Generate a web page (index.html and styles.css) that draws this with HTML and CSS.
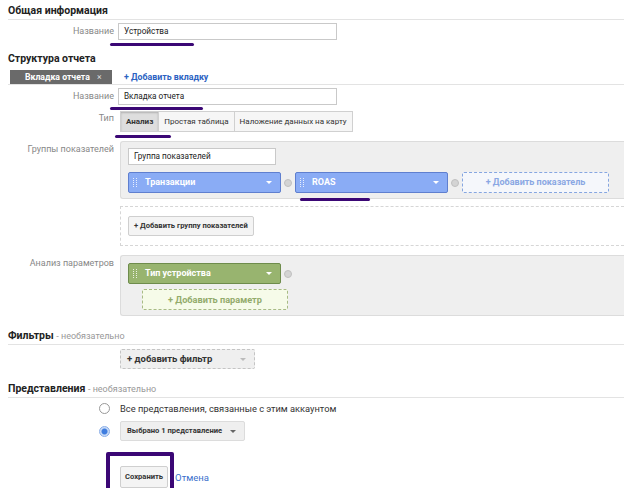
FILE: index.html
```html
<!DOCTYPE html>
<html>
<head>
    <meta charset="UTF-8">
    <title>Вкладка отчета</title>
    <link rel="stylesheet" href="styles.css">
</head>
<body>
    <div class="page">
        <div class="sec-title">Общая информация</div>
        <div class="row row-name1">
            <div class="lbl">Название</div>
            <div class="ctl"><div class="input w-name">Устройства</div></div>
            <span class="mark mark-1"></span>
        </div>

        <div class="sec-title sec-plain">Структура отчета</div>
        <div class="tabs">
            <div class="tab">Вкладка отчета <span class="tab-x">×</span></div>
            <a class="add-link">+ Добавить вкладку</a>
        </div>
        <div class="row row-name2">
            <div class="lbl">Название</div>
            <div class="ctl"><div class="input w-name">Вкладка отчета</div></div>
            <span class="mark mark-2"></span>
        </div>
        <div class="row row-type">
            <div class="lbl lbl-type">Тип</div>
            <div class="ctl">
                <div class="seg">
                    <span class="seg-btn active">Анализ</span>
                    <span class="seg-btn">Простая таблица</span>
                    <span class="seg-btn">Наложение данных на карту</span>
                </div>
            </div>
            <span class="mark mark-3"></span>
        </div>

        <div class="row row-groups">
            <div class="lbl lbl-box">Группы показателей</div>
            <div class="ctl">
                <div class="box">
                    <div class="input w-group">Группа показателей</div>
                    <div class="chips">
                        <div class="chip chip-blue"><span class="grip"></span>Транзакции<span class="caret"></span></div>
                        <span class="remove"></span>
                        <div class="chip chip-blue"><span class="grip"></span>ROAS<span class="caret"></span></div>
                        <span class="remove"></span>
                        <div class="add-dashed add-blue">+ Добавить показатель</div>
                    </div>
                </div>
                <div class="box-dashed">
                    <span class="btn">+ Добавить группу показателей</span>
                </div>
            </div>
            <span class="mark mark-4"></span>
        </div>

        <div class="row row-params">
            <div class="lbl lbl-box">Анализ параметров</div>
            <div class="ctl">
                <div class="box box-params">
                    <div class="chips">
                        <div class="chip chip-green"><span class="grip"></span>Тип устройства<span class="caret"></span></div>
                        <span class="remove"></span>
                    </div>
                    <div class="add-dashed add-green">+ Добавить параметр</div>
                </div>
            </div>
        </div>

        <div class="sec-title sec-opt">Фильтры <span class="opt">- необязательно</span></div>
        <div class="row row-filter">
            <div class="lbl"></div>
            <div class="ctl"><div class="select select-dashed">+ добавить фильтр<span class="caret caret-gray"></span></div></div>
        </div>

        <div class="sec-title sec-opt">Представления <span class="opt">- необязательно</span></div>
        <div class="row row-radio">
            <div class="lbl"><span class="radio"></span></div>
            <div class="ctl radio-text">Все представления, связанные с этим аккаунтом</div>
        </div>
        <div class="row row-radio2">
            <div class="lbl"><span class="radio checked"></span></div>
            <div class="ctl"><div class="select">Выбрано 1 представление<span class="caret caret-dark"></span></div></div>
        </div>

        <div class="row row-actions">
            <div class="lbl"></div>
            <div class="ctl actions">
                <span class="btn btn-save">Сохранить</span>
                <a class="cancel">Отмена</a>
            </div>
            <span class="mark-box"></span>
        </div>
    </div>
</body>
</html>
```

FILE: styles.css
```css
body {
    margin: 0;
    background: #fff;
    font-family: Roboto, "Liberation Sans", Arial, sans-serif;
    font-size: 9px;
    color: #333;
    overflow: hidden;
}
.page { padding: 3px 0 0 8px; }

.sec-title {
    font-size: 10.5px;
    font-weight: bold;
    color: #222;
    line-height: 16px;
    border-bottom: 1px solid #e3e3e3;
}
.sec-plain { border-bottom: none; margin-top: 11px; }
.sec-opt { margin-top: 12px; }
.opt { font-weight: normal; color: #999; font-size: 9px; }

.row {
    position: relative;
    display: flex;
    align-items: flex-start;
}
.lbl {
    width: 106px;
    flex: none;
    text-align: right;
    color: #888;
    line-height: 17px;
    padding-right: 4px;
}
.ctl { flex: 1; min-width: 0; }

.input {
    height: 15px;
    line-height: 15px;
    border: 1px solid #c9c9c9;
    background: #fff;
    padding: 0 5px;
    color: #222;
    font-size: 8.2px;
    box-sizing: content-box;
}
.w-name { width: 207px; }
.w-group { width: 136px; }

.row-name1 { margin-top: 3px; }
.row-name2 { margin-top: 3px; }

.tabs {
    display: flex;
    align-items: center;
    margin-top: 3px;
    border-bottom: 1px solid #e3e3e3;
}
.tab {
    background: #6a6a6a;
    color: #fff;
    font-weight: bold;
    font-size: 8.7px;
    white-space: nowrap;
    line-height: 14px;
    width: 87px;
    padding-left: 15px;
    margin-left: 2px;
}
.tab-x { margin-left: 5px; color: #ddd; font-weight: normal; }
.add-link {
    color: #2c62c2;
    font-weight: bold;
    font-size: 8.8px;
    margin-left: 12px;
}

.row-type { margin-top: 6px; }
.lbl-type { line-height: 14px; }
.seg { display: flex; }
.seg-btn {
    border: 1px solid #d0d0d0;
    background: #f6f6f6;
    padding: 0 5px;
    line-height: 19px;
    font-size: 8px;
    color: #333;
    margin-left: -1px;
}
.seg-btn:first-child { margin-left: 2px; }
.seg-btn.active {
    background: #dedede;
    font-weight: bold;
    box-shadow: inset 0 1px 2px rgba(0, 0, 0, 0.2);
}

.row-groups { margin-top: 9px; }
.lbl-box { padding-top: 0; }
.box {
    background: #efefef;
    border: 1px solid #dcdcdc;
    border-right: none;
    border-radius: 3px 0 0 3px;
    padding: 6px 0 5px 7px;
    margin-left: 2px;
}
.chips {
    display: flex;
    align-items: center;
    margin-top: 7px;
}
.chip {
    position: relative;
    width: 153px;
    height: 21px;
    line-height: 19px;
    border-radius: 2px;
    color: #fff;
    font-weight: bold;
    padding-left: 16px;
    box-sizing: border-box;
}
.chip-blue { background: #8aacf5; border: 1px solid #5f7fcf; }
.chip-green { background: #98b46f; border: 1px solid #6e8c4c; }
.grip {
    position: absolute;
    left: 4px;
    top: 5px;
    width: 2px;
    height: 9px;
    border-left: 1px dotted rgba(255, 255, 255, 0.8);
    border-right: 1px dotted rgba(255, 255, 255, 0.8);
}
.caret {
    position: absolute;
    right: 8px;
    top: 8px;
    border-left: 3px solid transparent;
    border-right: 3px solid transparent;
    border-top: 3px solid #fff;
}
.remove {
    width: 6px;
    height: 6px;
    border-radius: 50%;
    background: #d4d4d4;
    border: 1px solid #c0c0c0;
    margin: 0 3px;
    flex: none;
}
.add-dashed {
    height: 19px;
    line-height: 19px;
    text-align: center;
    font-weight: bold;
    border: 1px dashed;
    border-radius: 2px;
}
.add-blue {
    width: 145px;
    background: #f5f7fb;
    border-color: #86a6e0;
    color: #8aa7e3;
}
.add-green {
    width: 144px;
    font-size: 9.2px;
    background: #f6fbe9;
    border-color: #a8bb85;
    color: #93ab6c;
    margin: 5px 0 0 14px;
}

.box-dashed {
    margin: 7px 0 0 2px;
    height: 38px;
    border: 1px dashed #d6d6d6;
    border-right: none;
    display: flex;
    align-items: center;
    padding-left: 7px;
}
.btn {
    display: inline-block;
    border: 1px solid #cfcfcf;
    background: #f4f4f4;
    border-radius: 2px;
    font-weight: bold;
    font-size: 7.6px;
    color: #333;
    padding: 0 5px;
    line-height: 18px;
}

.row-params { margin-top: 9px; }
.box-params { padding: 7px 0 5px 7px; }
.box-params .chips { margin-top: 0; }

.row-filter { margin-top: 4px; }
.select {
    position: relative;
    display: inline-block;
    box-sizing: border-box;
    white-space: nowrap;
    margin-left: 2px;
    background: #efefef;
    border: 1px solid #dcdcdc;
    border-radius: 2px;
    font-weight: bold;
    font-size: 7.6px;
    color: #333;
    line-height: 18px;
    width: 125px;
    padding: 0 6px;
}
.select-dashed {
    border-style: dashed;
    border-color: #c4c4c4;
    width: 135px;
    font-size: 9.5px;
}
.caret-gray, .caret-dark { top: 8px; }
.caret-gray { border-top-color: #bbb; }
.caret-dark { border-top-color: #666; }

.row-radio { margin-top: 2px; }
.row-radio2 { margin-top: 4px; align-items: center; }
.radio {
    display: inline-block;
    width: 9px;
    height: 9px;
    border-radius: 50%;
    border: 1px solid #999;
    background: #fff;
    margin-right: 4px;
    vertical-align: middle;
}
.radio.checked {
    border-color: #8aaee8;
    background: radial-gradient(circle, #3f7ddf 0 2.5px, #c9dbf7 3.5px);
}
.radio-text { color: #333; font-size: 9.3px; line-height: 17px; padding-left: 2px; }

.row-actions { margin-top: 25px; }
.actions { display: flex; align-items: center; padding-left: 2px; }
.btn-save { line-height: 20px; padding: 0 4px; }
.cancel { color: #3b6fcc; margin-left: 7px; font-size: 9.5px; }

.mark {
    position: absolute;
    height: 3px;
    border-radius: 2px;
    background: #3b0775;
}
.mark-1 { left: 102px; top: 20px; width: 84px; }
.mark-2 { left: 102px; top: 19px; width: 93px; }
.mark-3 { left: 107px; top: 24px; width: 56px; }
.mark-4 { left: 292px; top: 57px; width: 70px; }
.mark-box {
    position: absolute;
    left: 98px;
    top: -14px;
    width: 60px;
    height: 34px;
    border: 4px solid #3b0775;
    border-radius: 2px;
}
```
